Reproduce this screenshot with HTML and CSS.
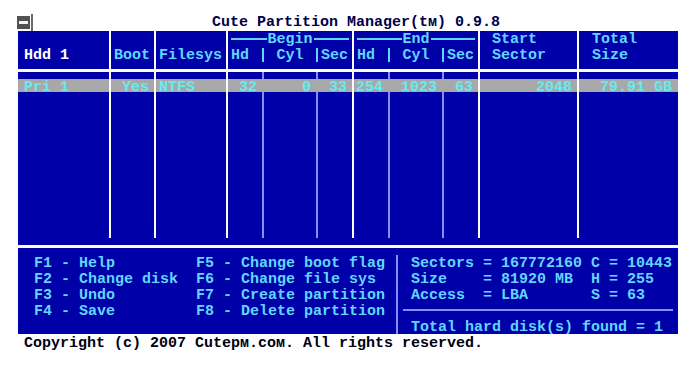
FILE: index.html
```html
<!DOCTYPE html>
<html lang="en">
<head>
    <meta charset="UTF-8">
    <meta name="viewport" content="width=device-width, initial-scale=1.0">
    <title>Cute Partition Manager</title>
    <link rel="stylesheet" href="styles.css">
</head>
<body>
    <div class="screen">
        <div class="titlebar">
            <svg class="sysmenu" width="17" height="17" viewBox="0 0 17 17">
                <rect x="0" y="2" width="13" height="13" fill="#525252"/>
                <rect x="2" y="7" width="9" height="3" fill="#f4f4f4"/>
                <rect x="14" y="0" width="2" height="17" fill="#6a6a6a"/>
            </svg>
            <span class="title">Cute Partition Manager(tм) 0.9.8</span>
        </div>

        <div class="panel">
            <div class="table">
                <!-- header -->
                <div class="th hdd"><div class="line"></div><div class="line">Hdd 1</div></div>
                <div class="th"><div class="line"></div><div class="line">Boot</div></div>
                <div class="th"><div class="line"></div><div class="line">Filesys</div></div>
                <div class="th group">
                    <div class="line caption"><i></i><span>Begin</span><i></i></div>
                    <div class="line sub">
                        <span>Hd</span><b class="bar"></b><span class="mid">Cyl</span><b class="bar"></b><span>Sec</span>
                    </div>
                </div>
                <div class="th group">
                    <div class="line caption"><i></i><span>End</span><i></i></div>
                    <div class="line sub">
                        <span>Hd</span><b class="bar"></b><span class="mid">Cyl</span><b class="bar"></b><span>Sec</span>
                    </div>
                </div>
                <div class="th wide"><div class="line">Start</div><div class="line">Sector</div></div>
                <div class="th wide2"><div class="line">Total</div><div class="line">Size</div></div>

                <!-- partitions -->
                <div class="td"><div class="sel left">Pri 1</div></div>
                <div class="td"><div class="sel">Yes</div></div>
                <div class="td"><div class="sel left fs">NTFS</div></div>
                <div class="td group">
                    <div class="sel split"><span>32</span><span>0</span><span>33</span></div>
                </div>
                <div class="td group">
                    <div class="sel split"><span>254</span><span>1023</span><span>63</span></div>
                </div>
                <div class="td"><div class="sel">2048</div></div>
                <div class="td"><div class="sel size">79.91 GB</div></div>
            </div>
            <div class="foot-gap"></div>
            <div class="rule"></div>

            <div class="status">
                <div class="keys">
                    <span>F1 - Help</span>
                    <span>F2 - Change disk</span>
                    <span>F3 - Undo</span>
                    <span>F4 - Save</span>
                    <span>F5 - Change boot flag</span>
                    <span>F6 - Change file sys</span>
                    <span>F7 - Create partition</span>
                    <span>F8 - Delete partition</span>
                </div>
                <div class="divider"></div>
                <div class="info">
                    <div class="geo">
                        <span>Sectors</span><span>= 167772160</span><span>C = 10443</span>
                        <span>Size</span><span>= 81920 MB</span><span>H = 255</span>
                        <span>Access</span><span>= LBA</span><span>S = 63</span>
                    </div>
                    <div class="info-rule"></div>
                    <div class="total">Total hard disk(s) found = 1</div>
                </div>
            </div>
        </div>

        <div class="copyright">Copyright (c) 2007 Cutepм.coм. All rights reserved.</div>
    </div>
</body>
</html>
```

FILE: styles.css
```css
body {
    margin: 0;
    background-color: #fff;
    font-family: "Liberation Mono", "DejaVu Sans Mono", monospace;
    font-size: 15px;
    font-weight: bold;
    line-height: 16px;
}

.screen {
    width: 694px;
    height: 369px;
    padding-top: 14px;
    box-sizing: border-box;
}

.titlebar {
    display: flex;
    align-items: flex-start;
    height: 17px;
}

.sysmenu {
    margin-left: 17px;
}

.title {
    margin-left: 178px;
    padding-top: 1px;
    height: 16px;
    color: #00004a;
}

.panel {
    margin-left: 18px;
    width: 660px;
    background-color: #0000a8;
}

.table {
    display: grid;
    grid-template-columns: 91px 43px 70px 124px 124px 97px 99px;
    grid-template-rows: 38px 166px;
    gap: 3px 2px;
    background-color: #fcfcfc;
}

.th {
    background-color: #0000a8;
    color: #62d6ff;
    padding-top: 1px;
    padding-left: 3px;
}

.th .line {
    height: 16px;
    white-space: pre;
}

.th.hdd {
    padding-left: 6px;
    color: #fff;
}

.th.wide {
    padding-left: 12px;
}

.th.wide2 {
    padding-left: 13px;
}

.th.group {
    padding-left: 0;
}

.caption {
    display: flex;
    align-items: flex-start;
    gap: 1px;
    padding: 0 3px 0 3px;
}

.caption i {
    flex: 1;
    height: 2px;
    margin-top: 6px;
    background-color: currentColor;
}

.sub {
    display: grid;
    grid-template-columns: 34px 2px 52px 2px 34px;
    align-items: start;
}

.sub span {
    padding-left: 3px;
}

.sub span.mid {
    padding-left: 0;
    text-align: center;
}

.sub .bar {
    height: 14px;
    background-color: currentColor;
}

.td {
    background-color: #0000a8;
    padding-top: 7px;
}

.td.group {
    background-image: linear-gradient(90deg,
        transparent 34px, #8c8cff 34px, #8c8cff 36px, transparent 36px,
        transparent 88px, #8c8cff 88px, #8c8cff 90px, transparent 90px);
}

.sel {
    height: 13px;
    line-height: 18px;
    background-color: #a8a8a8;
    color: #66eaf0;
    text-align: right;
    padding: 0 5px;
    white-space: pre;
}

.sel.left {
    text-align: left;
    padding-left: 6px;
}

.sel.fs {
    padding-left: 3px;
}

.sel.size {
    padding-right: 6px;
}

.sel.split {
    display: grid;
    grid-template-columns: 34px 52px 34px;
    grid-template-rows: 13px;
    column-gap: 2px;
    padding: 0;
}

.split span {
    padding-right: 5px;
}

.foot-gap {
    height: 7px;
}

.rule {
    height: 3px;
    background-color: #fcfcfc;
}

.status {
    display: flex;
    height: 86px;
    padding-top: 6px;
    box-sizing: border-box;
    color: #62d6ff;
}

.keys {
    width: 362px;
    padding: 2px 0 0 16px;
    display: grid;
    grid-template-columns: 162px auto;
    grid-template-rows: repeat(4, 16px);
    grid-auto-flow: column;
    align-content: start;
    white-space: pre;
}

.divider {
    width: 2px;
    margin-top: 1px;
    background-color: #8c8cff;
}

.info {
    flex: 1;
}

.geo {
    display: grid;
    grid-template-columns: 72px 108px auto;
    grid-auto-rows: 16px;
    padding: 2px 0 0 13px;
    white-space: pre;
}

.info-rule {
    height: 2px;
    margin: 5px 5px 7px;
    background-color: #8c8cff;
}

.total {
    padding: 2px 0 0 13px;
}

.copyright {
    padding: 2px 0 0 24px;
    color: #000010;
}
```
